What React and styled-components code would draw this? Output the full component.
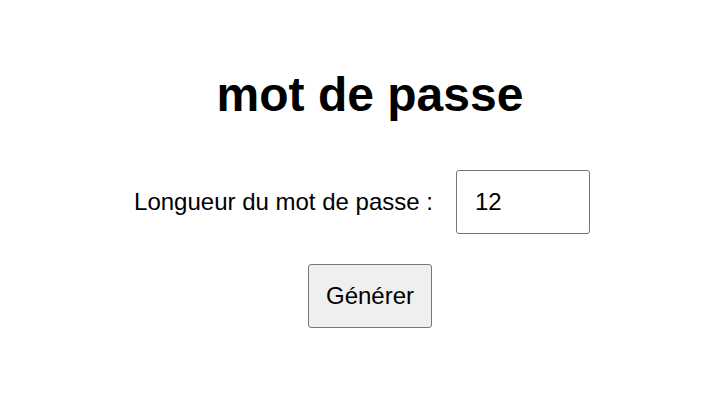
import React, { useState } from 'react';
import styled, { createGlobalStyle } from 'styled-components';

const GlobalStyle = createGlobalStyle`
    html, body {
        margin: 0;
        padding: 0;
        background: #ffffff;
        font-family: "Liberation Sans", Arial, sans-serif;
        color: #000000;
    }
`;

const Page = styled.div`
    display: flex;
    flex-direction: column;
    align-items: center;
    padding: 67px 0 0 18px;
`;

const Title = styled.h1`
    margin: 0 0 48px 0;
    font-size: 48px;
    font-weight: 700;
    line-height: 55px;
`;

const Row = styled.div`
    display: flex;
    flex-direction: row;
    align-items: center;
    margin-bottom: 30px;
`;

const Label = styled.label`
    font-size: 24px;
    margin-right: 23px;
`;

const Input = styled.input`
    box-sizing: border-box;
    width: 134px;
    height: 64px;
    padding: 0 18px;
    margin-right: 16px;
    font-family: inherit;
    font-size: 24px;
    color: #000000;
    border: 1px solid #767676;
    border-radius: 3px;
    background: #ffffff;
    outline: none;
`;

const Button = styled.button`
    box-sizing: border-box;
    height: 64px;
    padding: 0 17px;
    font-family: inherit;
    font-size: 24px;
    color: #000000;
    background: #efefef;
    border: 1px solid #767676;
    border-radius: 3px;
    cursor: pointer;
`;

const App = () => {
    const [length, setLength] = useState('12');

    return (
        <>
            <GlobalStyle />
            <Page>
                <Title>mot de passe</Title>
                <Row>
                    <Label htmlFor="longueur">Longueur du mot de passe :</Label>
                    <Input
                        id="longueur"
                        type="text"
                        value={length}
                        onChange={(e) => setLength(e.target.value)}
                    />
                </Row>
                <Button>Générer</Button>
            </Page>
        </>
    );
};

export default App;
